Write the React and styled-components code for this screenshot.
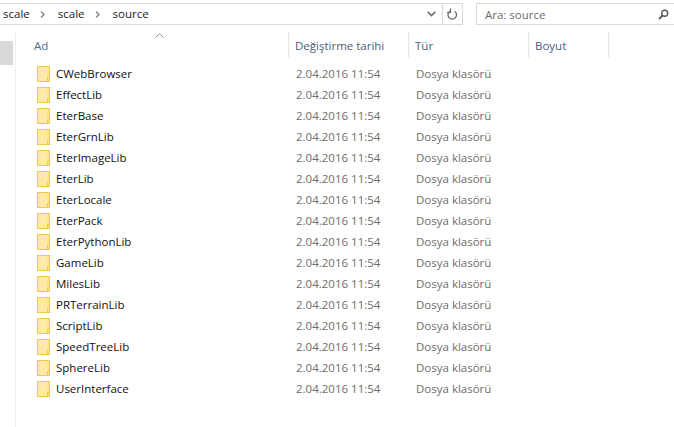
import React from "react";
import styled, { createGlobalStyle } from "styled-components";

const Global = createGlobalStyle`
  html, body { margin: 0; padding: 0; background: #fff; }
  body { font-family: "Open Sans", "Noto Sans", sans-serif; overflow: hidden; }
`;

const Window = styled.div`
  width: 674px;
  height: 427px;
  display: flex;
  flex-direction: column;
  overflow: hidden;
`;
const TopBar = styled.div`
  display: flex;
  height: 22px;
  margin-top: 3px;
  flex: none;
`;
const AddressBar = styled.div`
  width: 463px;
  box-sizing: border-box;
  display: flex;
  align-items: center;
  border: 1px solid #d9d9d9;
  border-left: 0;
  font-size: 11.5px;
  color: #1a1a1a;
`;
const Crumbs = styled.div`
  flex: 1;
  display: flex;
  align-items: center;
  padding-left: 3px;
`;
const Crumb = styled.span`
  line-height: 20px;
`;
const Chevron = styled.svg`
  width: 5px;
  height: 7px;
  margin: 0 13px 0 10px;
  flex: none;
`;
const AddrBtn = styled.div`
  width: ${p => p.$w}px;
  height: 20px;
  display: flex;
  align-items: center;
  justify-content: center;
  flex: none;
  ${p => p.$sep && "border-left: 1px solid #d9d9d9; box-sizing: border-box;"}
`;
const SearchBox = styled.div`
  margin-left: 13px;
  flex: 1;
  box-sizing: border-box;
  display: flex;
  align-items: center;
  justify-content: space-between;
  border: 1px solid #d9d9d9;
  border-right: 0;
  padding: 0 5px 0 8px;
  font-size: 11.5px;
  color: #6d6d6d;
`;
const Body = styled.div`
  flex: 1;
  display: flex;
  min-height: 0;
  margin-top: 8px;
`;
const Sidebar = styled.div`
  width: 15px;
  flex: none;
  border-right: 1px solid #f0f0f0;
  margin-top: 0;
`;
const SideSelected = styled.div`
  width: 13px;
  height: 24px;
  margin-top: 8px;
  background: #d9d9d9;
`;
const Content = styled.div`
  flex: 1;
  min-width: 0;
`;
const Header = styled.div`
  position: relative;
  display: flex;
  height: 25px;
  margin-bottom: 5px;
`;
const HeadCell = styled.div`
  width: ${p => p.$w}px;
  box-sizing: border-box;
  flex: none;
  padding-left: ${p => p.$pl}px;
  border-right: 1px solid #e5e5e5;
  font-size: 11.5px;
  line-height: 25px;
  color: ${p => p.$first ? "#4c6a94" : "#4c607a"};
`;
const SortCaret = styled.svg`
  position: absolute;
  left: 139px;
  top: 0;
  width: 9px;
  height: 5px;
`;
const List = styled.div`
  display: flex;
  flex-direction: column;
`;
const Row = styled.div`
  display: flex;
  height: 21px;
  align-items: center;
  font-size: 11.5px;
`;
const NameCell = styled.div`
  width: 272px;
  flex: none;
  box-sizing: border-box;
  padding-left: 21px;
  display: flex;
  align-items: center;
  gap: 6px;
  color: #111;
`;
const MetaCell = styled.div`
  width: ${p => p.$w}px;
  flex: none;
  box-sizing: border-box;
  padding-left: ${p => p.$pl}px;
  color: #6d6d6d;
`;

const Folder = () => (
  <svg width="13" height="16" viewBox="0 0 13 16" style={{ flex: "none" }}>
    <rect x="0.5" y="0.5" width="12" height="15" fill="#fde58e" stroke="#eec84f" />
    <rect x="1" y="1" width="9" height="14" fill="#feeaa6" />
    <path d="M10.5 15V11.5H12.5" fill="none" stroke="#eec84f" />
  </svg>
);

const folders = ["CWebBrowser","EffectLib","EterBase","EterGrnLib","EterImageLib","EterLib","EterLocale","EterPack","EterPythonLib","GameLib","MilesLib","PRTerrainLib","ScriptLib","SpeedTreeLib","SphereLib","UserInterface"];

const Arrow = () => (
  <Chevron viewBox="0 0 5 7"><path d="M1 0.5L4 3.5L1 6.5" fill="none" stroke="#8a8a8a" strokeWidth="1.5" /></Chevron>
);

export default function App() {
  return (
    <Window>
      <Global />
      <TopBar>
        <AddressBar>
          <Crumbs>
            <Crumb>scale</Crumb><Arrow />
            <Crumb>scale</Crumb><Arrow />
            <Crumb>source</Crumb>
          </Crumbs>
          <AddrBtn $w={21}>
            <svg width="9" height="6" viewBox="0 0 9 6"><path d="M0.7 0.8L4.5 4.6L8.3 0.8" fill="none" stroke="#666" strokeWidth="1.5" /></svg>
          </AddrBtn>
          <AddrBtn $w={20} $sep>
            <svg width="11" height="13" viewBox="0 0 11 13"><path d="M3 3.2A4.3 4.3 0 1 0 7.5 3.2" fill="none" stroke="#666" strokeWidth="1.3" /><path d="M3.5 0.5V4.5H0" fill="none" stroke="#666" strokeWidth="1.2" /></svg>
          </AddrBtn>
        </AddressBar>
        <SearchBox>
          <span>Ara: source</span>
          <svg width="11" height="11" viewBox="0 0 11 11"><circle cx="6.7" cy="4.2" r="3" fill="none" stroke="#5a5a5a" strokeWidth="1.4" /><path d="M4.5 6.5L1 10" stroke="#5a5a5a" strokeWidth="1.8" /></svg>
        </SearchBox>
      </TopBar>
      <Body>
        <Sidebar><SideSelected /></Sidebar>
        <Content>
          <Header>
            <SortCaret viewBox="0 0 9 5"><path d="M0.5 4.5L4.5 0.7L8.5 4.5" fill="none" stroke="#8a8a8a" /></SortCaret>
            <HeadCell $w={273} $pl={18} $first>Ad</HeadCell>
            <HeadCell $w={120} $pl={6}>Değiştirme tarihi</HeadCell>
            <HeadCell $w={120} $pl={6}>Tür</HeadCell>
            <HeadCell $w={80} $pl={6}>Boyut</HeadCell>
          </Header>
          <List>
            {folders.map(n => (
              <Row key={n}>
                <NameCell><Folder />{n}</NameCell>
                <MetaCell $w={121} $pl={8}>2.04.2016 11:54</MetaCell>
                <MetaCell $w={120} $pl={7}>Dosya klasörü</MetaCell>
              </Row>
            ))}
          </List>
        </Content>
      </Body>
    </Window>
  );
}
